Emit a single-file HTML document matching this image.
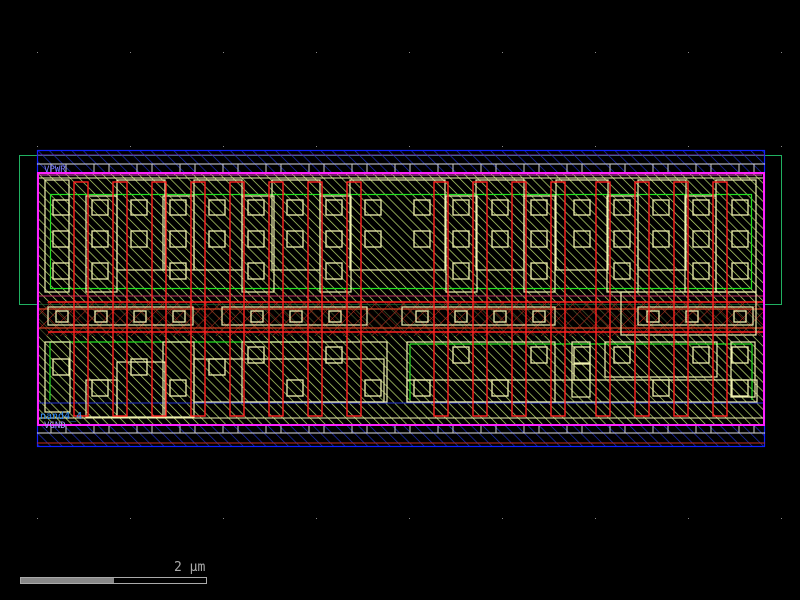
<!DOCTYPE html>
<html><head><meta charset="utf-8"><style>
html,body{margin:0;padding:0;background:#000;width:800px;height:600px;overflow:hidden}
svg{display:block}
text{font-family:"DejaVu Sans Mono","Liberation Mono",monospace}
</style></head><body>
<svg width="800" height="600" viewBox="0 0 800 600" xmlns="http://www.w3.org/2000/svg">
<defs>
<pattern id="hy" width="6.4" height="6.4" patternUnits="userSpaceOnUse" patternTransform="rotate(-45)">
<line x1="0" y1="0" x2="0" y2="6.4" stroke="#c0e070" stroke-width="1.4"/>
</pattern>
<pattern id="hb" width="8" height="8" patternUnits="userSpaceOnUse" patternTransform="rotate(-45)">
<line x1="0" y1="0" x2="0" y2="8" stroke="#2030c0" stroke-width="1.4"/>
</pattern>
<pattern id="hr" width="10" height="10" patternUnits="userSpaceOnUse" patternTransform="rotate(45)">
<line x1="0" y1="0" x2="0" y2="10" stroke="#c03020" stroke-width="1"/>
<line x1="0" y1="0" x2="10" y2="0" stroke="#a02818" stroke-width="1"/>
</pattern>
</defs>
<g fill="#888">
<rect x="37" y="52" width="1" height="1"/><rect x="130" y="52" width="1" height="1"/><rect x="223" y="52" width="1" height="1"/><rect x="316" y="52" width="1" height="1"/><rect x="409" y="52" width="1" height="1"/><rect x="502" y="52" width="1" height="1"/><rect x="595" y="52" width="1" height="1"/><rect x="688" y="52" width="1" height="1"/><rect x="781" y="52" width="1" height="1"/>
<rect x="37" y="146" width="1" height="1"/><rect x="130" y="146" width="1" height="1"/><rect x="223" y="146" width="1" height="1"/><rect x="316" y="146" width="1" height="1"/><rect x="409" y="146" width="1" height="1"/><rect x="502" y="146" width="1" height="1"/><rect x="595" y="146" width="1" height="1"/><rect x="688" y="146" width="1" height="1"/><rect x="781" y="146" width="1" height="1"/>
<rect x="37" y="518" width="1" height="1"/><rect x="130" y="518" width="1" height="1"/><rect x="223" y="518" width="1" height="1"/><rect x="316" y="518" width="1" height="1"/><rect x="409" y="518" width="1" height="1"/><rect x="502" y="518" width="1" height="1"/><rect x="595" y="518" width="1" height="1"/><rect x="688" y="518" width="1" height="1"/><rect x="781" y="518" width="1" height="1"/>
</g>
<rect x="19.5" y="155.5" width="762" height="149" fill="none" stroke="#20b060" stroke-width="1"/>
<rect x="37" y="150" width="728" height="22" fill="url(#hb)"/>
<rect x="37" y="426" width="728" height="21" fill="url(#hb)"/>
<rect x="37.5" y="150.5" width="727" height="296" fill="none" stroke="#1020ff" stroke-width="1.2"/>
<line x1="37" y1="155" x2="765" y2="155" stroke="#7020b0"/>
<line x1="37" y1="443" x2="765" y2="443" stroke="#c03020"/>
<line x1="37" y1="164" x2="765" y2="164" stroke="#ddd"/>
<line x1="37" y1="433" x2="765" y2="433" stroke="#ddd"/>
<g stroke="#ccc" stroke-width="1">
<path d="M51 164v8M66 164v8M94 164v8M109 164v8M137 164v8M152 164v8M180 164v8M195 164v8M223 164v8M238 164v8M266 164v8M281 164v8M309 164v8M324 164v8M352 164v8M367 164v8M395 164v8M410 164v8M438 164v8M453 164v8M481 164v8M496 164v8M524 164v8M539 164v8M567 164v8M582 164v8M610 164v8M625 164v8M653 164v8M668 164v8M696 164v8M711 164v8M739 164v8M754 164v8"/>
<path d="M51 426v7M66 426v7M94 426v7M109 426v7M137 426v7M152 426v7M180 426v7M195 426v7M223 426v7M238 426v7M266 426v7M281 426v7M309 426v7M324 426v7M352 426v7M367 426v7M395 426v7M410 426v7M438 426v7M453 426v7M481 426v7M496 426v7M524 426v7M539 426v7M567 426v7M582 426v7M610 426v7M625 426v7M653 426v7M668 426v7M696 426v7M711 426v7M739 426v7M754 426v7"/>
</g>
<rect x="38" y="173" width="726" height="252" fill="url(#hy)"/>
<rect x="38" y="302" width="726" height="34" fill="#000" opacity="0.6"/>
<rect x="38" y="302" width="726" height="34" fill="url(#hr)"/>
<g fill="none" stroke="#d04020" stroke-width="1.2">
<line x1="38" y1="309" x2="764" y2="309"/><line x1="38" y1="328" x2="764" y2="328"/>
</g>
<g fill="none" stroke="#ff2020" stroke-width="1.5">
<line x1="48" y1="302" x2="764" y2="302"/><line x1="48" y1="332" x2="764" y2="332"/>
</g>
<g fill="none" stroke="#20e020" stroke-width="1.2">
<rect x="50.5" y="194.5" width="701" height="94"/>
<line x1="50" y1="342" x2="300" y2="342"/><line x1="410" y1="344" x2="752" y2="344"/>
<line x1="50" y1="342" x2="50" y2="400"/><line x1="410" y1="344" x2="410" y2="400"/><line x1="752" y1="344" x2="752" y2="400"/>
</g>
<line x1="38" y1="403" x2="764" y2="403" stroke="#2030d0"/>
<line x1="38" y1="296" x2="764" y2="296" stroke="#c03060"/>
<g fill="none" stroke="#f0f0b0" stroke-width="1.2">
<rect x="45" y="180" width="24" height="112"/>
<rect x="86" y="196" width="31" height="96"/>
<rect x="117" y="180" width="48" height="90"/>
<rect x="163" y="196" width="31" height="74"/>
<rect x="194" y="180" width="48" height="90"/>
<rect x="242" y="196" width="32" height="96"/>
<rect x="272" y="180" width="48" height="90"/>
<rect x="320" y="196" width="31" height="96"/>
<rect x="350" y="180" width="95" height="90"/>
<rect x="446" y="196" width="31" height="96"/>
<rect x="476" y="180" width="48" height="90"/>
<rect x="524" y="196" width="31" height="96"/>
<rect x="556" y="180" width="52" height="90"/>
<rect x="607" y="196" width="31" height="96"/>
<rect x="638" y="180" width="48" height="90"/>
<rect x="685" y="196" width="31" height="96"/>
<rect x="716" y="180" width="40" height="112"/>
<rect x="45" y="342" width="25" height="70"/>
<rect x="86" y="380" width="31" height="37"/>
<rect x="117" y="362" width="48" height="55"/>
<rect x="163" y="342" width="31" height="75"/>
<rect x="194" y="359" width="190" height="43"/>
<rect x="242" y="342" width="145" height="60"/>
<rect x="407" y="342" width="148" height="60"/>
<rect x="407" y="380" width="350" height="22"/>
<rect x="605" y="342" width="112" height="35"/>
<rect x="572" y="342" width="18" height="55"/>
<rect x="731" y="342" width="24" height="55"/>
<rect x="48" y="307" width="145" height="18"/>
<rect x="222" y="307" width="145" height="18"/>
<rect x="402" y="307" width="153" height="18"/>
<rect x="638" y="307" width="115" height="18"/>
<rect x="621" y="292" width="135" height="43"/>
</g>
<g fill="none" stroke="#f0f0b0" stroke-width="1.3">
<rect x="53" y="200" width="16" height="15"/><rect x="53" y="231" width="16" height="16"/><rect x="53" y="263" width="16" height="16"/>
<rect x="92" y="200" width="16" height="15"/><rect x="92" y="231" width="16" height="16"/><rect x="92" y="263" width="16" height="16"/>
<rect x="131" y="200" width="16" height="15"/><rect x="131" y="231" width="16" height="16"/>
<rect x="170" y="200" width="16" height="15"/><rect x="170" y="231" width="16" height="16"/><rect x="170" y="263" width="16" height="16"/>
<rect x="209" y="200" width="16" height="15"/><rect x="209" y="231" width="16" height="16"/>
<rect x="248" y="200" width="16" height="15"/><rect x="248" y="231" width="16" height="16"/><rect x="248" y="263" width="16" height="16"/>
<rect x="287" y="200" width="16" height="15"/><rect x="287" y="231" width="16" height="16"/>
<rect x="326" y="200" width="16" height="15"/><rect x="326" y="231" width="16" height="16"/><rect x="326" y="263" width="16" height="16"/>
<rect x="365" y="200" width="16" height="15"/><rect x="365" y="231" width="16" height="16"/>
<rect x="414" y="200" width="16" height="15"/><rect x="414" y="231" width="16" height="16"/>
<rect x="453" y="200" width="16" height="15"/><rect x="453" y="231" width="16" height="16"/><rect x="453" y="263" width="16" height="16"/>
<rect x="492" y="200" width="16" height="15"/><rect x="492" y="231" width="16" height="16"/>
<rect x="531" y="200" width="16" height="15"/><rect x="531" y="231" width="16" height="16"/><rect x="531" y="263" width="16" height="16"/>
<rect x="574" y="200" width="16" height="15"/><rect x="574" y="231" width="16" height="16"/>
<rect x="614" y="200" width="16" height="15"/><rect x="614" y="231" width="16" height="16"/><rect x="614" y="263" width="16" height="16"/>
<rect x="653" y="200" width="16" height="15"/><rect x="653" y="231" width="16" height="16"/>
<rect x="693" y="200" width="16" height="15"/><rect x="693" y="231" width="16" height="16"/><rect x="693" y="263" width="16" height="16"/>
<rect x="732" y="200" width="16" height="15"/><rect x="732" y="231" width="16" height="16"/><rect x="732" y="263" width="16" height="16"/>
<rect x="53" y="359" width="16" height="16"/><rect x="92" y="380" width="16" height="16"/><rect x="131" y="359" width="16" height="16"/><rect x="170" y="380" width="16" height="16"/><rect x="209" y="359" width="16" height="16"/>
<rect x="248" y="347" width="16" height="16"/><rect x="287" y="380" width="16" height="16"/><rect x="326" y="347" width="16" height="16"/><rect x="365" y="380" width="16" height="16"/>
<rect x="414" y="380" width="16" height="16"/><rect x="453" y="347" width="16" height="16"/><rect x="492" y="380" width="16" height="16"/><rect x="531" y="347" width="16" height="16"/>
<rect x="574" y="347" width="16" height="16"/><rect x="574" y="364" width="16" height="16"/><rect x="614" y="347" width="16" height="16"/><rect x="653" y="380" width="16" height="16"/><rect x="693" y="347" width="16" height="16"/><rect x="732" y="347" width="16" height="16"/><rect x="732" y="380" width="16" height="16"/>
<rect x="56" y="311" width="12" height="11"/><rect x="95" y="311" width="12" height="11"/><rect x="134" y="311" width="12" height="11"/><rect x="173" y="311" width="12" height="11"/>
<rect x="251" y="311" width="12" height="11"/><rect x="290" y="311" width="12" height="11"/><rect x="329" y="311" width="12" height="11"/>
<rect x="416" y="311" width="12" height="11"/><rect x="455" y="311" width="12" height="11"/><rect x="494" y="311" width="12" height="11"/><rect x="533" y="311" width="12" height="11"/>
<rect x="647" y="311" width="12" height="11"/><rect x="686" y="311" width="12" height="11"/><rect x="734" y="311" width="12" height="11"/>
</g>
<g fill="none" stroke="#ff2020" stroke-width="1.4">
<rect x="74" y="182" width="14" height="234"/><rect x="113" y="182" width="14" height="234"/>
<rect x="152" y="182" width="14" height="234"/><rect x="191" y="182" width="14" height="234"/>
<rect x="230" y="182" width="14" height="234"/><rect x="269" y="182" width="14" height="234"/>
<rect x="308" y="182" width="14" height="234"/><rect x="347" y="182" width="14" height="234"/>
<rect x="434" y="182" width="14" height="234"/><rect x="473" y="182" width="14" height="234"/>
<rect x="512" y="182" width="14" height="234"/><rect x="551" y="182" width="14" height="234"/>
<rect x="596" y="182" width="14" height="234"/><rect x="635" y="182" width="14" height="234"/>
<rect x="674" y="182" width="14" height="234"/><rect x="713" y="182" width="14" height="234"/>
</g>
<line x1="38" y1="418" x2="764" y2="418" stroke="#f0f0b0"/>
<line x1="38" y1="178" x2="764" y2="178" stroke="#f0f0b0"/>
<rect x="38" y="173" width="726" height="252" fill="none" stroke="#ff20ff" stroke-width="2"/>
<line x1="40" y1="175" x2="762" y2="175" stroke="#e040c0" stroke-width="1"/>
<text x="44" y="172" font-size="9" fill="#8080ff">VPWR</text>
<text x="40" y="419" font-size="10" fill="#3090ff">nand4_4</text>
<text x="44" y="428" font-size="9" fill="#a0a0ff">VGND</text>
<text x="174" y="571" font-size="13" fill="#aaa">2 μm</text>
<rect x="20.5" y="577.5" width="186" height="6" fill="none" stroke="#aaa"/>
<rect x="21" y="578" width="93" height="5" fill="#888"/>
</svg>
</body></html>
